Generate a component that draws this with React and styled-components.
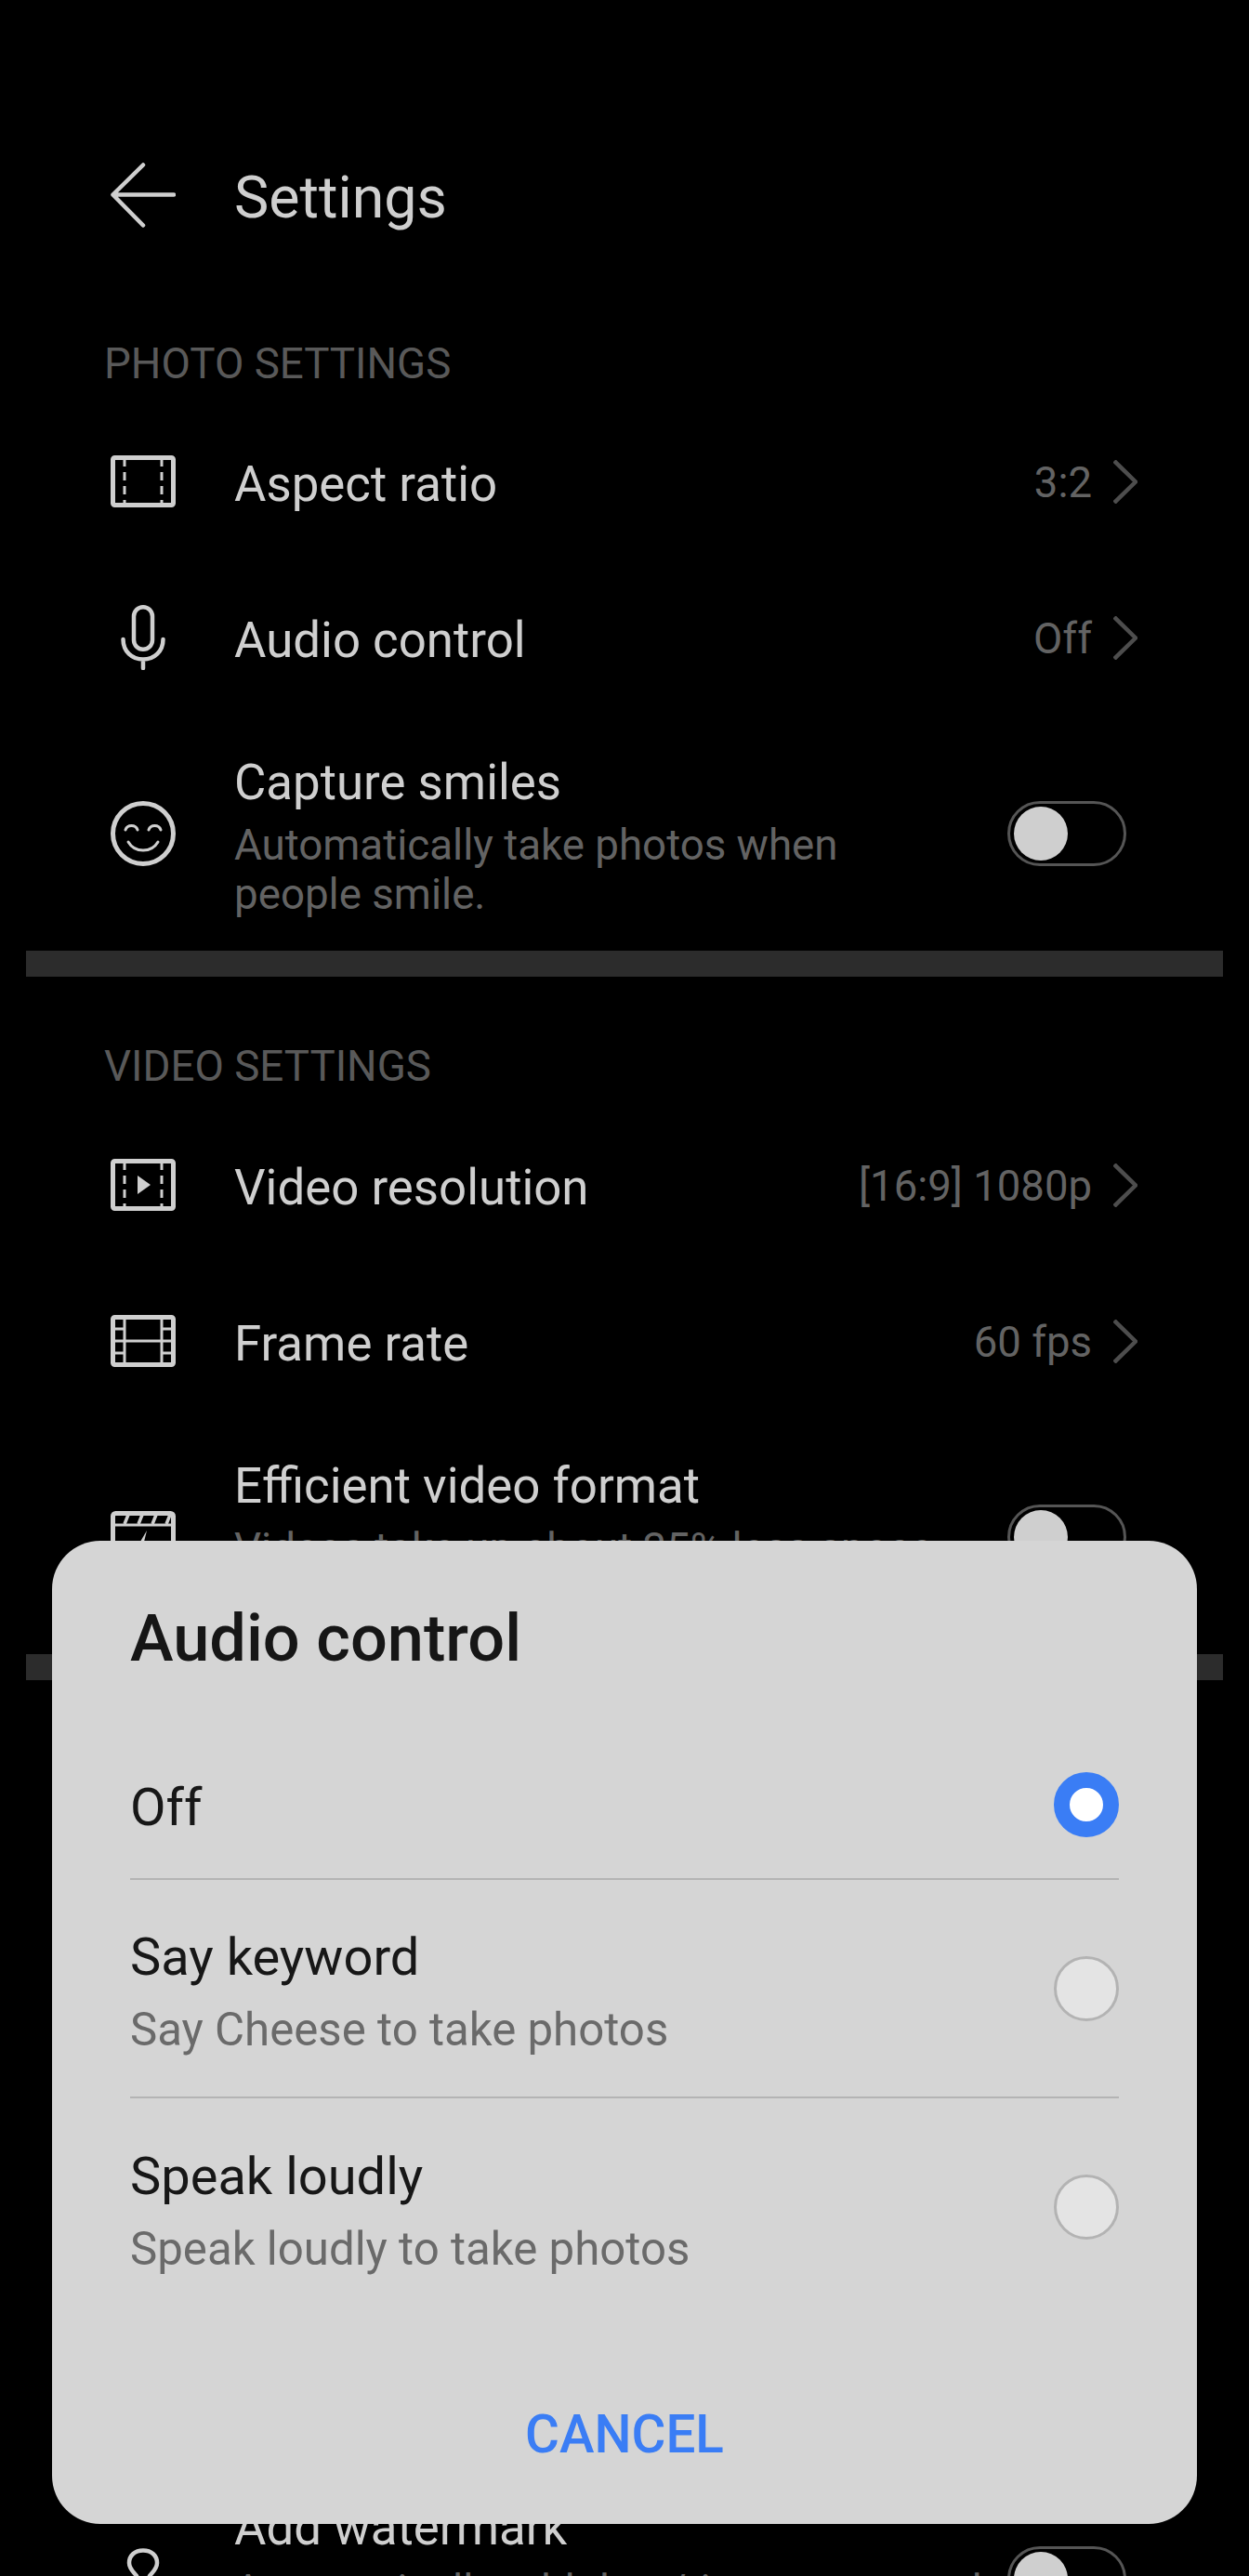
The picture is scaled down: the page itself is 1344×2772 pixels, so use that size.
import React from "react";
import styled, { createGlobalStyle } from "styled-components";

const GlobalStyle = createGlobalStyle`
  html, body {
    margin: 0;
    padding: 0;
    background: #000;
  }
  body {
    font-family: Roboto, "Liberation Sans", sans-serif;
  }
`;

const Phone = styled.div`
  position: relative;
  width: 1344px;
  height: 2772px;
  overflow: hidden;
  background: #000;
`;

const Header = styled.div`
  display: flex;
  align-items: center;
  height: 70px;
  padding: 175px 0 0 119px;
  gap: 63px;
`;

const HeaderTitle = styled.div`
  color: #cfcfcf;
  font-size: 62.7px;
  line-height: 70px;
  padding-top: 5px;
`;

const SectionLabel = styled.div`
  color: #595959;
  font-size: 45.7px;
  line-height: 52px;
  padding: ${(p) => p.$top}px 0 ${(p) => p.$bottom}px 112px;
`;

const Row = styled.div`
  display: flex;
  align-items: center;
  height: ${(p) => p.$height}px;
  margin-top: ${(p) => p.$top || 0}px;
  padding: 0 120px 0 119px;
  gap: 63px;
`;

const IconSlot = styled.div`
  display: flex;
  align-items: center;
  justify-content: center;
  width: 70px;
  flex: none;
`;

const RowBody = styled.div`
  flex: 1;
  min-width: 0;
  padding-top: 5px;
`;

const RowTitle = styled.div`
  color: #cfcfcf;
  font-size: 52.8px;
  line-height: 66px;
`;

const RowSub = styled.div`
  color: #636363;
  font-size: 45.7px;
  line-height: 53px;
  width: 770px;
  min-height: 106px;
  margin-top: 8px;
  white-space: ${(p) => (p.$single ? "nowrap" : "normal")};
`;

const RowValue = styled.div`
  display: flex;
  align-items: center;
  gap: 23px;
  color: #636363;
  font-size: 45.5px;
`;

const ValueText = styled.span`
  padding-top: 3px;
`;

const Toggle = styled.div`
  display: flex;
  align-items: center;
  box-sizing: border-box;
  width: 128px;
  height: 70px;
  padding: 0 4px;
  flex: none;
  margin-right: 12px;
  border: 3px solid #555;
  border-radius: 35px;
`;

const Knob = styled.div`
  width: 58px;
  height: 58px;
  border-radius: 50%;
  background: #cfcfcf;
`;

const Band = styled.div`
  height: 28px;
  margin: 0 28px;
  background: #2c2c2c;
`;

const Dialog = styled.div`
  position: absolute;
  left: 56px;
  top: 1658px;
  box-sizing: border-box;
  width: 1232px;
  height: 1058px;
  padding: 0 84px;
  border-radius: 52px;
  background: #d5d5d5;
`;

const DialogTitle = styled.div`
  color: #161616;
  font-size: 70.3px;
  font-weight: 500;
  line-height: 84px;
  padding: 63px 0 58px;
`;

const Option = styled.div`
  display: flex;
  align-items: center;
  justify-content: space-between;
  box-sizing: border-box;
  height: ${(p) => p.$height}px;
  border-bottom: ${(p) => (p.$line ? "2px solid #b4b4b4" : "none")};
`;

const OptionText = styled.div`
  padding-top: ${(p) => p.$top}px;
`;

const OptionTitle = styled.div`
  color: #171717;
  font-size: 56px;
  line-height: 66px;
`;

const OptionSub = styled.div`
  color: #6a6a6a;
  font-size: 49.2px;
  line-height: 60px;
  margin-top: 15px;
`;

const Radio = styled.div`
  box-sizing: border-box;
  width: 70px;
  height: 70px;
  flex: none;
  border-radius: 50%;
  border: ${(p) => (p.$on ? "17.5px solid #3a7df5" : "3px solid #b3b3b3")};
  background: ${(p) => (p.$on ? "#fff" : "#e4e4e4")};
`;

const Actions = styled.div`
  display: flex;
  justify-content: center;
  padding-top: 95px;
`;

const CancelButton = styled.div`
  color: #3a7df5;
  font-size: 56.5px;
  font-weight: 500;
  line-height: 66px;
`;

const Stroke = styled.svg`
  display: block;
  fill: none;
  stroke: ${(p) => p.$color || "#cfcfcf"};
  stroke-width: ${(p) => p.$w || 5};
  stroke-linecap: round;
  stroke-linejoin: round;
  flex: none;
`;

const BackIcon = () => (
  <Stroke width="70" height="70" viewBox="0 0 70 70" $w={4.5}>
    <path d="M35 2.5 L2.5 34.5 L35 67.5 M2.5 34.5 H68" />
  </Stroke>
);

const Chevron = () => (
  <Stroke width="26" height="47" viewBox="0 0 26 47" $w={4.5} $color="#4d4d4d">
    <path d="M1 1 L24 23.5 L1 46" strokeLinecap="butt" />
  </Stroke>
);

const RatioIcon = () => (
  <Stroke width="70" height="56" viewBox="0 0 70 56" $w={5}>
    <rect x="2.5" y="2.5" width="65" height="51" rx="2" />
    <path d="M15 3 V53 M55 3 V53" strokeWidth="3" strokeDasharray="9 6" strokeLinecap="butt" />
  </Stroke>
);

const MicIcon = () => (
  <Stroke width="48" height="70" viewBox="0 0 48 70" $w={4.5}>
    <rect x="14" y="2.25" width="20" height="45.5" rx="10" />
    <path d="M2.5 37 C2.5 50 12 58.5 24 58.5 C36 58.5 45.5 50 45.5 37 M24 59 V68" />
  </Stroke>
);

const SmileIcon = () => (
  <Stroke width="70" height="70" viewBox="0 0 70 70" $w={5}>
    <circle cx="35" cy="35" r="32.5" />
    <path d="M16 31 C18 25 27 25 29 31 M41 31 C43 25 52 25 54 31 M19 44 C26 56 44 56 51 44" strokeWidth="3" />
  </Stroke>
);

const VideoIcon = () => (
  <Stroke width="70" height="56" viewBox="0 0 70 56" $w={5}>
    <rect x="2.5" y="2.5" width="65" height="51" rx="2" />
    <path d="M15 3 V53 M55 3 V53" strokeWidth="3" strokeDasharray="9 6" strokeLinecap="butt" />
    <path d="M29 18 L43 28 L29 38 Z" fill="#cfcfcf" stroke="none" />
  </Stroke>
);

const FrameIcon = () => (
  <Stroke width="70" height="56" viewBox="0 0 70 56" $w={5}>
    <rect x="2.5" y="2.5" width="65" height="51" rx="2" />
    <path d="M15 3 V53 M55 3 V53 M15 28 H55 M3 15 H15 M3 28 H15 M3 41 H15 M55 15 H67 M55 28 H67 M55 41 H67" strokeWidth="3" strokeLinecap="butt" />
  </Stroke>
);

const ClapIcon = () => (
  <Stroke width="70" height="56" viewBox="0 0 70 56" $w={5}>
    <rect x="2.5" y="2.5" width="65" height="51" rx="3" />
    <path d="M3 15 H67" strokeWidth="3" strokeLinecap="butt" />
    <path d="M19 4 L15 14 M34 4 L30 14 M49 4 L45 14 M64 4 L60 14" strokeWidth="3.5" strokeLinecap="butt" />
    <path d="M39 21 L29 38 H35 L33 50 L42 33 H36 Z" fill="#cfcfcf" stroke="none" />
  </Stroke>
);

const PinIcon = () => (
  <Stroke width="70" height="66" viewBox="0 0 70 66" $w={4.5}>
    <path d="M35 2.5 C26 2.5 20 8 20 16 C20 22 24 25 28 30 M35 2.5 C44 2.5 50 8 50 16 C50 22 46 25 42 30" />
  </Stroke>
);

const Value = ({ children }) => (
  <RowValue>
    <ValueText>{children}</ValueText>
    <Chevron />
  </RowValue>
);

export default function App() {
  return (
    <Phone>
      <GlobalStyle />
      <Header>
        <BackIcon />
        <HeaderTitle>Settings</HeaderTitle>
      </Header>
      <SectionLabel $top={121} $bottom={16}>PHOTO SETTINGS</SectionLabel>
      <Row $height={168}>
        <IconSlot><RatioIcon /></IconSlot>
        <RowBody><RowTitle>Aspect ratio</RowTitle></RowBody>
        <Value>3:2</Value>
      </Row>
      <Row $height={168}>
        <IconSlot><MicIcon /></IconSlot>
        <RowBody><RowTitle>Audio control</RowTitle></RowBody>
        <Value>Off</Value>
      </Row>
      <Row $height={253}>
        <IconSlot><SmileIcon /></IconSlot>
        <RowBody>
          <RowTitle>Capture smiles</RowTitle>
          <RowSub>Automatically take photos when people smile.</RowSub>
        </RowBody>
        <Toggle><Knob /></Toggle>
      </Row>
      <Band />
      <SectionLabel $top={71} $bottom={17}>VIDEO SETTINGS</SectionLabel>
      <Row $height={168}>
        <IconSlot><VideoIcon /></IconSlot>
        <RowBody><RowTitle>Video resolution</RowTitle></RowBody>
        <Value>[16:9] 1080p</Value>
      </Row>
      <Row $height={168}>
        <IconSlot><FrameIcon /></IconSlot>
        <RowBody><RowTitle>Frame rate</RowTitle></RowBody>
        <Value>60 fps</Value>
      </Row>
      <Row $height={253}>
        <IconSlot><ClapIcon /></IconSlot>
        <RowBody>
          <RowTitle>Efficient video format</RowTitle>
          <RowSub $single>Videos take up about 35% less space</RowSub>
        </RowBody>
        <Toggle><Knob /></Toggle>
      </Row>
      <Band />
      <Row $height={253} $top={840}>
        <IconSlot><PinIcon /></IconSlot>
        <RowBody>
          <RowTitle>Add watermark</RowTitle>
          <RowSub $single>Automatically add date/time stamp and</RowSub>
        </RowBody>
        <Toggle><Knob /></Toggle>
      </Row>

      <Dialog>
        <DialogTitle>Audio control</DialogTitle>
        <Option $height={160} $line>
          <OptionText $top={5}>
            <OptionTitle>Off</OptionTitle>
          </OptionText>
          <Radio $on />
        </Option>
        <Option $height={235} $line>
          <OptionText $top={8}>
            <OptionTitle>Say keyword</OptionTitle>
            <OptionSub>Say Cheese to take photos</OptionSub>
          </OptionText>
          <Radio />
        </Option>
        <Option $height={234}>
          <OptionText $top={8}>
            <OptionTitle>Speak loudly</OptionTitle>
            <OptionSub>Speak loudly to take photos</OptionSub>
          </OptionText>
          <Radio />
        </Option>
        <Actions><CancelButton>CANCEL</CancelButton></Actions>
      </Dialog>
    </Phone>
  );
}
